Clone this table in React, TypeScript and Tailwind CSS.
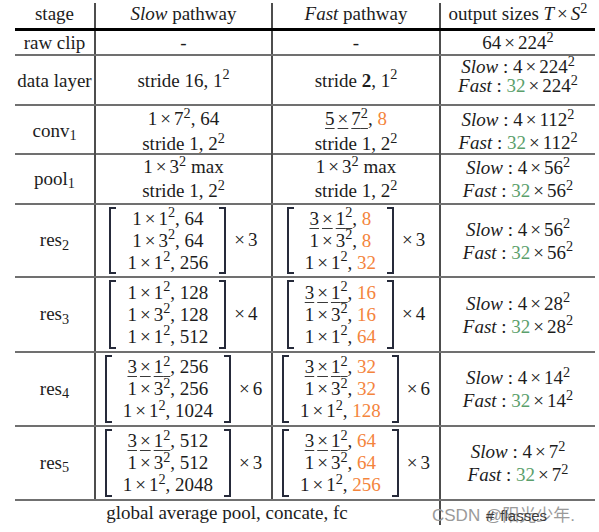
const cols = 'grid grid-cols-[81px_177px_168px_154px]'
const hline = 'border-b-2 border-[#707070]'
const vline = 'border-r-2 border-[#4d4d4d]'
const orange = 'text-[#f4843c]'
const green = 'text-[#5b9f6c]'
const over =
  'underline decoration-[#3a3a3a] decoration-1 underline-offset-[3px] [text-decoration-skip-ink:none]'

function Mul() {
  return <span className="mx-[3px]">×</span>
}

function Sq({ a, b }: { a: string; b: string }) {
  return (
    <>
      {a}
      <Mul />
      {b}
      <sup>2</sup>
    </>
  )
}

function Cell({
  children,
  last,
  className = '',
}: {
  children?: React.ReactNode
  last?: boolean
  className?: string
}) {
  return (
    <div
      className={`flex items-center justify-center text-center ${last ? '' : vline} ${className}`}
    >
      {children}
    </div>
  )
}

interface KProps {
  a: string
  b: string
  n: string
  line?: boolean
  hot?: boolean
}

const KLine = ({ a, b, n, line, hot }: KProps) => (
  <div className="whitespace-nowrap">
    <span className={line ? over : ''}>
      <Sq a={a} b={b} />
    </span>
    , <span className={hot ? orange : ''}>{n}</span>
  </div>
)

function Bracket({ side }: { side: 'l' | 'r' }) {
  return (
    <div
      className={`w-[7px] border-y-2 border-[#262a3a] ${side === 'l' ? 'border-l-2' : 'border-r-2'}`}
    />
  )
}

interface ResProps {
  first: string
  n: [string, string, string]
  rep: string
  fast?: boolean
}

// [ kernel rows ] ×k block
const ResBlock = ({ first, n, rep, fast }: ResProps) => {
  const line = fast || first === '3'
  return (
    <div className="flex h-full items-center">
      <div className="flex self-stretch py-[2px]">
        <Bracket side="l" />
        <div className="flex flex-col justify-center px-[11px] text-center leading-[22px]">
          <KLine a={first} b="1" n={n[0]} line={line} hot={fast} />
          <KLine a="1" b="3" n={n[1]} hot={fast} />
          <KLine a="1" b="1" n={n[2]} hot={fast} />
        </div>
        <Bracket side="r" />
      </div>
      <span className="ml-[8px] whitespace-nowrap">
        ×<span className="ml-[3px]">{rep}</span>
      </span>
    </div>
  )
}

const Out = ({ s }: { s: string }) => (
  <div className="leading-[23px]">
    <div className="whitespace-nowrap">
      <i>Slow</i> : <Sq a="4" b={s} />
    </div>
    <div className="whitespace-nowrap">
      <i>Fast</i> : <span className={green}>32</span>
      <Mul />
      {s}
      <sup>2</sup>
    </div>
  </div>
)

const resRows: {
  label: string
  h: string
  slow: ResProps
  fast: ResProps
  out: string
}[] = [
  {
    label: '2',
    h: 'h-[73px]',
    slow: { first: '1', n: ['64', '64', '256'], rep: '3' },
    fast: { first: '3', n: ['8', '8', '32'], rep: '3', fast: true },
    out: '56',
  },
  {
    label: '3',
    h: 'h-[75px]',
    slow: { first: '1', n: ['128', '128', '512'], rep: '4' },
    fast: { first: '3', n: ['16', '16', '64'], rep: '4', fast: true },
    out: '28',
  },
  {
    label: '4',
    h: 'h-[74px]',
    slow: { first: '3', n: ['256', '256', '1024'], rep: '6' },
    fast: { first: '3', n: ['32', '32', '128'], rep: '6', fast: true },
    out: '14',
  },
  {
    label: '5',
    h: 'h-[74px]',
    slow: { first: '3', n: ['512', '512', '2048'], rep: '3' },
    fast: { first: '3', n: ['64', '64', '256'], rep: '3', fast: true },
    out: '7',
  },
]

export default function App() {
  return (
    <div className="relative h-[532px] w-[599px] overflow-hidden bg-white pt-[3px] font-['Liberation_Serif',serif] text-[19px] text-[#1c1c1c]">
      <div className="ml-[15px] w-[580px]">
        {/* header */}
        <div className={`${cols} h-[28px] border-b-[3px] border-black leading-[21px]`}>
          <Cell className="items-start">stage</Cell>
          <Cell className="items-start">
            <span>
              <i>Slow</i> pathway
            </span>
          </Cell>
          <Cell className="items-start">
            <span>
              <i>Fast</i> pathway
            </span>
          </Cell>
          <Cell last className="items-start">
            <span className="whitespace-nowrap">
              output sizes <i>T</i>
              <Mul />
              <i>S</i>
              <sup>2</sup>
            </span>
          </Cell>
        </div>

        <div className={`${cols} h-[25px] ${hline} leading-[23px]`}>
          <Cell>raw clip</Cell>
          <Cell>-</Cell>
          <Cell>-</Cell>
          <Cell last>
            <span>
              <Sq a="64" b="224" />
            </span>
          </Cell>
        </div>

        <div className={`${cols} h-[50px] ${hline} leading-[23px]`}>
          <Cell className="whitespace-nowrap">data layer</Cell>
          <Cell>
            <span>
              stride 16, 1<sup>2</sup>
            </span>
          </Cell>
          <Cell>
            <span>
              stride <b>2</b>, 1<sup>2</sup>
            </span>
          </Cell>
          <Cell last className="items-start pt-[1px]">
            <div className="leading-[19px]">
              <div className="whitespace-nowrap">
                <i>Slow</i> : <Sq a="4" b="224" />
              </div>
              <div className="whitespace-nowrap">
                <i>Fast</i> : <span className={green}>32</span>
                <Mul />
                224<sup>2</sup>
              </div>
            </div>
          </Cell>
        </div>

        <div className={`${cols} h-[49px] ${hline}`}>
          <Cell>
            <span>
              conv<sub>1</sub>
            </span>
          </Cell>
          <Cell>
            <div className="leading-[25px]">
              <div>
                <Sq a="1" b="7" />, 64
              </div>
              <div>
                stride 1, 2<sup>2</sup>
              </div>
            </div>
          </Cell>
          <Cell>
            <div className="leading-[25px]">
              <div>
                <span className={over}>
                  <Sq a="5" b="7" />
                </span>
                , <span className={orange}>8</span>
              </div>
              <div>
                stride 1, 2<sup>2</sup>
              </div>
            </div>
          </Cell>
          <Cell last>
            <Out s="112" />
          </Cell>
        </div>

        <div className={`${cols} h-[50px] ${hline}`}>
          <Cell>
            <span>
              pool<sub>1</sub>
            </span>
          </Cell>
          <Cell>
            <div className="leading-[24px]">
              <div>
                1<Mul />3<sup>2</sup> max
              </div>
              <div>
                stride 1, 2<sup>2</sup>
              </div>
            </div>
          </Cell>
          <Cell>
            <div className="leading-[24px]">
              <div>
                1<Mul />3<sup>2</sup> max
              </div>
              <div>
                stride 1, 2<sup>2</sup>
              </div>
            </div>
          </Cell>
          <Cell last>
            <Out s="56" />
          </Cell>
        </div>

        {resRows.map((r) => (
          <div key={r.label} className={`${cols} ${r.h} ${hline}`}>
            <Cell>
              <span>
                res<sub>{r.label}</sub>
              </span>
            </Cell>
            <Cell>
              <ResBlock {...r.slow} />
            </Cell>
            <Cell>
              <ResBlock {...r.fast} />
            </Cell>
            <Cell last>
              <Out s={r.out} />
            </Cell>
          </div>
        ))}

        {/* footer */}
        <div className={`${cols} h-[31px]`}>
          <div className={`col-span-3 h-[24px] ${vline} text-center leading-[24px]`}>
            global average pool, concate, fc
          </div>
          <div />
        </div>
      </div>

      {/* watermark */}
      <div className="absolute left-[432px] top-[505px] whitespace-nowrap font-['Liberation_Sans','Noto_Sans_CJK_SC',sans-serif] text-[17px] leading-[22px] text-[#9a9a9a]">
        CSDN @阳光少年.
      </div>
      <div className="absolute left-[486px] top-[505px] whitespace-nowrap font-['Liberation_Sans',sans-serif] text-[15px] leading-[22px] text-[#3c3c3c]">
        #<span className="ml-[6px]">flasses</span>
      </div>
    </div>
  )
}
